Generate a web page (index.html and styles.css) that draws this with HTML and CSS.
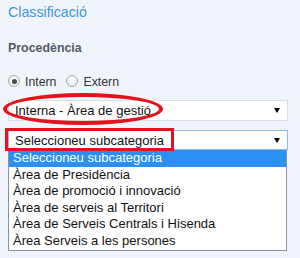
FILE: index.html
```html
<!DOCTYPE html>
<html lang="ca">
<head>
  <meta charset="UTF-8" />
  <title>Classificació</title>
  <link rel="stylesheet" href="styles.css">
</head>
<body>
  <div class="panel">
    <div class="title">Classificació</div>
    <div class="label">Procedència</div>

    <div class="radios">
      <span class="radio checked"></span><span class="radio-text">Intern</span>
      <span class="radio"></span><span class="radio-text">Extern</span>
    </div>

    <div class="select first">
      <span class="value">Interna - Àrea de gestió</span>
      <span class="arrow"></span>
    </div>

    <div class="select focused">
      <span class="value">Seleccioneu subcategoria</span>
      <span class="arrow"></span>
    </div>

    <ul class="options">
      <li class="selected">Seleccioneu subcategoria</li>
      <li>Àrea de Presidència</li>
      <li>Àrea de promoció i innovació</li>
      <li>Àrea de serveis al Territori</li>
      <li>Àrea de Serveis Centrals i Hisenda</li>
      <li>Àrea Serveis a les persones</li>
    </ul>

    <!-- annotations drawn on top -->
    <div class="mark-ellipse"></div>
    <div class="mark-rect"></div>
  </div>
</body>
</html>
```

FILE: styles.css
```css
html, body {
  margin: 0;
  padding: 0;
  background: #f0f5fc;
  height: 100%;
  overflow: hidden;
  font-family: 'Liberation Sans', Arial, sans-serif;
}

.panel {
  position: relative;
  padding: 4px 0 0 8px;
}

.title {
  font-size: 14.2px;
  line-height: 16px;
  color: #3d97d8;
}

.label {
  margin-top: 20px;
  font-size: 12.4px;
  line-height: 16px;
  font-weight: bold;
  color: #555a66;
}

.radios {
  margin-top: 19px;
  height: 12px;
  display: flex;
  align-items: center;
}

.radio {
  box-sizing: border-box;
  width: 12px;
  height: 12px;
  border-radius: 50%;
  border: 1px solid #a8a8a8;
  background: radial-gradient(circle at 50% 40%, #ffffff 0%, #e4e4e4 100%);
  display: flex;
  align-items: center;
  justify-content: center;
}

.radio.checked::after {
  content: "";
  width: 5px;
  height: 5px;
  border-radius: 50%;
  background: #4a4a4a;
}

.radio-text {
  font-size: 12.3px;
  line-height: 14px;
  color: #333;
  margin: 2px 10px 0 5px;
}

.select {
  box-sizing: border-box;
  width: 280px;
  height: 21px;
  background: #fff;
  border: 1px solid #d9dee4;
  display: flex;
  align-items: center;
  justify-content: space-between;
  padding: 0 7px 0 6px;
  font-size: 13px;
  color: #111;
}

.select.first {
  margin-top: 13px;
}

.select.focused {
  margin-top: 9px;
  height: 20px;
  border-color: #8fb9e8;
}

.arrow {
  width: 0;
  height: 0;
  border-left: 3px solid transparent;
  border-right: 3px solid transparent;
  border-top: 5px solid #000;
}

.options {
  list-style: none;
  margin: 0;
  padding: 0;
  width: 279px;
  box-sizing: border-box;
  border: 1px solid #8494a8;
  border-top: none;
  background: #fff;
  font-size: 13px;
  color: #111;
}

.options li {
  height: 16.6px;
  line-height: 16.6px;
  padding-left: 4px;
  white-space: nowrap;
}

.options li.selected {
  background: #2b8ff3;
  color: #fff;
}

.mark-ellipse {
  position: absolute;
  left: 3px;
  top: 93px;
  width: 160px;
  height: 32px;
  box-sizing: border-box;
  border: 4px solid #e3121e;
  border-radius: 50%;
}

.mark-rect {
  position: absolute;
  left: 5px;
  top: 128px;
  width: 169px;
  height: 23px;
  box-sizing: border-box;
  border: 3px solid #e3121e;
}
```
